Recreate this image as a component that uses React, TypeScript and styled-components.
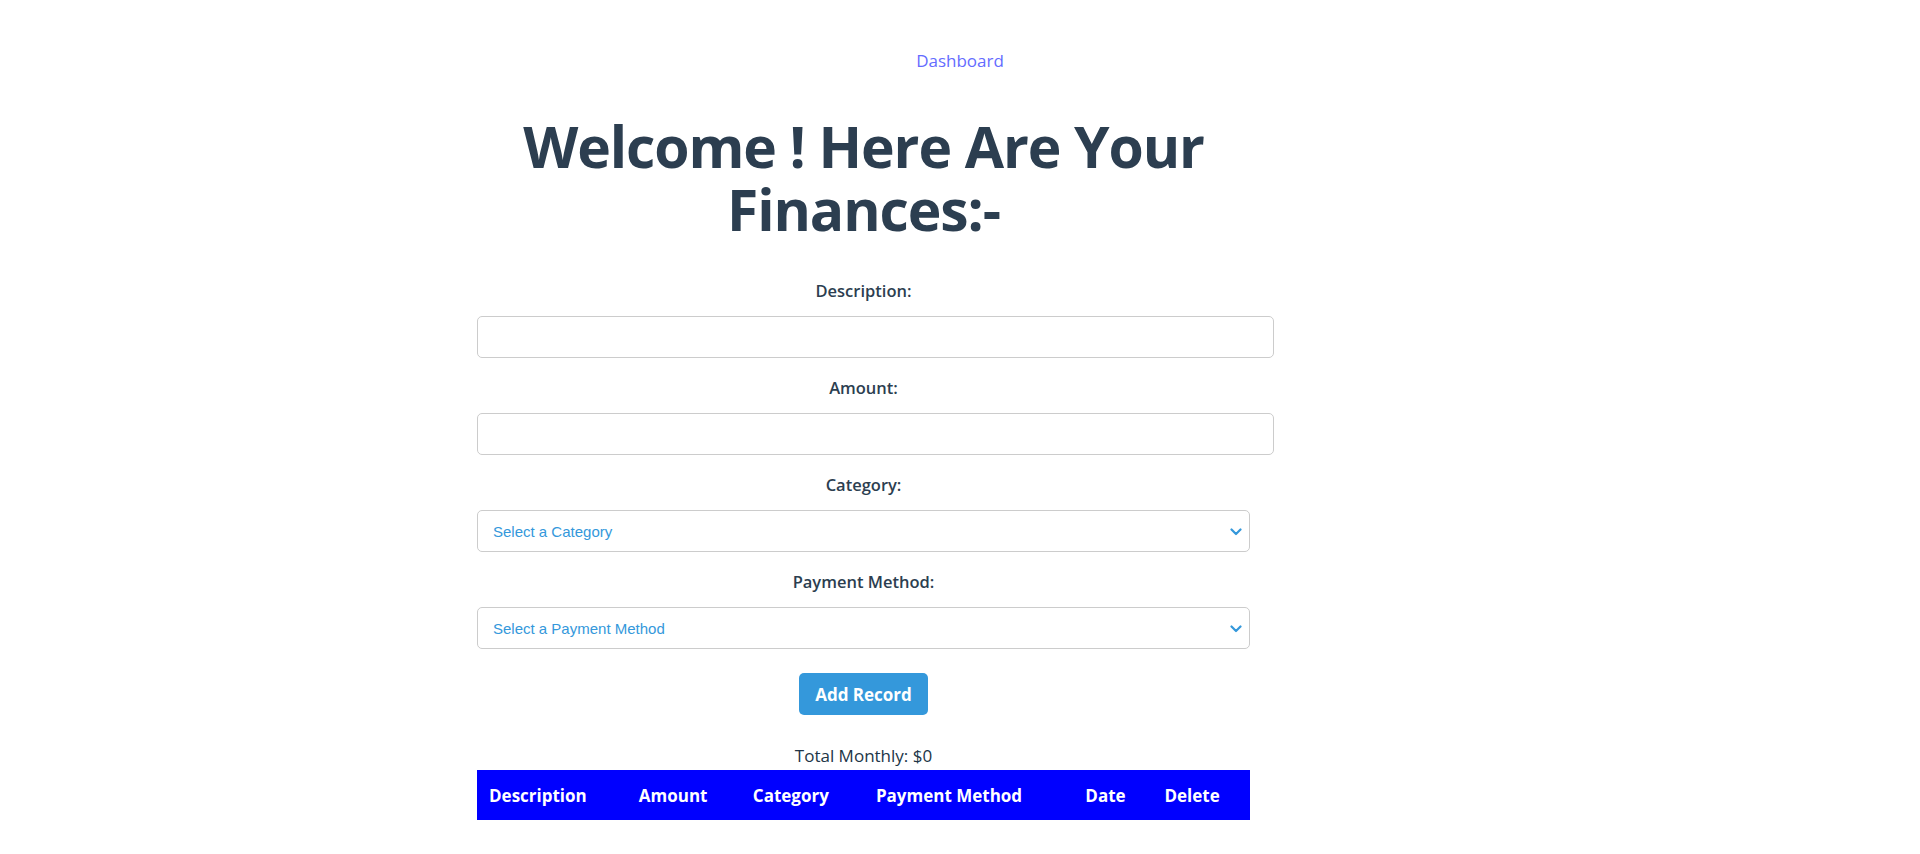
import React from "react";
import styled, { createGlobalStyle } from "styled-components";

const GlobalStyle = createGlobalStyle`
  html, body {
    margin: 0;
    padding: 0;
    background: #ffffff;
  }
  body {
    font-family: "Open Sans", "Noto Sans", sans-serif;
    color: #213547;
  }
  * { box-sizing: border-box; }
`;

const Page = styled.div`
  width: 1920px;
  min-height: 854px;
  padding-top: 49px;
  display: flex;
  flex-direction: column;
`;

const Nav = styled.nav`
  display: flex;
  justify-content: center;
  height: 24px;
  align-items: center;
`;

const NavLink = styled.a`
  font-size: 17px;
  font-weight: 500;
  color: #646cff;
  text-decoration: none;
  line-height: 24px;
`;

const Column = styled.main`
  margin-top: 42px;
  margin-left: 477px;
  width: 773px;
  display: flex;
  flex-direction: column;
  align-items: stretch;
  text-align: center;
`;

const Title = styled.h1`
  margin: 0;
  font-size: 57px;
  line-height: 63px;
  font-weight: 700;
  letter-spacing: -1.1px;
  color: #2c3e50;
  align-self: center;
  width: 720px;
`;

const Form = styled.form`
  margin-top: 38px;
  display: flex;
  flex-direction: column;
`;

const Field = styled.div`
  display: flex;
  flex-direction: column;
  align-items: flex-start;
  margin-bottom: 18px;
`;

const Label = styled.label`
  align-self: stretch;
  text-align: center;
  font-size: 16.5px;
  font-weight: 600;
  line-height: 24px;
  color: #2c3e50;
  margin-bottom: 13px;
`;

const TextInput = styled.input`
  width: calc(100% + 24px);
  height: 42px;
  border: 1px solid #cccccc;
  border-radius: 5px;
  padding: 0 11px;
  font-size: 15px;
  font-family: "Liberation Sans", Arial, sans-serif;
  outline: none;
  background: #fff;
`;

const SelectWrap = styled.div`
  position: relative;
  width: 100%;
`;

const Select = styled.select`
  appearance: none;
  -webkit-appearance: none;
  width: 100%;
  height: 42px;
  border: 1px solid #cccccc;
  border-radius: 5px;
  padding: 0 40px 0 15px;
  font-size: 15px;
  font-family: "Liberation Sans", Arial, sans-serif;
  color: #3498db;
  background: #fff;
  outline: none;
`;

const Chevron = styled.svg`
  position: absolute;
  right: 8px;
  top: 50%;
  width: 12px;
  height: 8px;
  margin-top: -3px;
  pointer-events: none;
`;

const ButtonRow = styled.div`
  display: flex;
  justify-content: center;
  margin-top: 6px;
`;

const Button = styled.button`
  height: 42px;
  padding: 0 16px;
  border: none;
  border-radius: 5px;
  background: #3498db;
  color: #ffffff;
  font-family: "Open Sans", "Noto Sans", sans-serif;
  font-size: 17px;
  font-weight: 700;
  cursor: pointer;
`;

const Total = styled.p`
  margin: 29px 0 2px;
  font-size: 17px;
  line-height: 24px;
  color: #213547;
`;

const Table = styled.table`
  width: 100%;
  border-collapse: collapse;
`;

const HeadRow = styled.tr`
  background: #0000ff;
`;

const Th = styled.th`
  text-align: left;
  padding: 12px;
  height: 50px;
  font-size: 17px;
  font-weight: 700;
  color: #ffffff;
  white-space: nowrap;
`;

const ChevronIcon = () => (
  <Chevron viewBox="0 0 12 8">
    <path d="M1.5 1.5 L6 6 L10.5 1.5" fill="none" stroke="#3498db" strokeWidth="2.2" strokeLinecap="round" strokeLinejoin="round" />
  </Chevron>
);

export default function App() {
  return (
    <>
      <GlobalStyle />
      <Page>
        <Nav>
          <NavLink href="#">Dashboard</NavLink>
        </Nav>
        <Column>
          <Title>Welcome ! Here Are Your Finances:-</Title>
          <Form onSubmit={(e) => e.preventDefault()}>
            <Field>
              <Label htmlFor="desc">Description:</Label>
              <TextInput id="desc" type="text" />
            </Field>
            <Field>
              <Label htmlFor="amount">Amount:</Label>
              <TextInput id="amount" type="number" />
            </Field>
            <Field>
              <Label htmlFor="cat">Category:</Label>
              <SelectWrap>
                <Select id="cat" defaultValue="">
                  <option value="">Select a Category</option>
                </Select>
                <ChevronIcon />
              </SelectWrap>
            </Field>
            <Field>
              <Label htmlFor="pay">Payment Method:</Label>
              <SelectWrap>
                <Select id="pay" defaultValue="">
                  <option value="">Select a Payment Method</option>
                </Select>
                <ChevronIcon />
              </SelectWrap>
            </Field>
            <ButtonRow>
              <Button type="submit">Add Record</Button>
            </ButtonRow>
          </Form>
          <Total>Total Monthly: $0</Total>
          <Table>
            <thead>
              <HeadRow>
                <Th>Description</Th>
                <Th>Amount</Th>
                <Th>Category</Th>
                <Th>Payment Method</Th>
                <Th>Date</Th>
                <Th>Delete</Th>
              </HeadRow>
            </thead>
          </Table>
        </Column>
      </Page>
    </>
  );
}
